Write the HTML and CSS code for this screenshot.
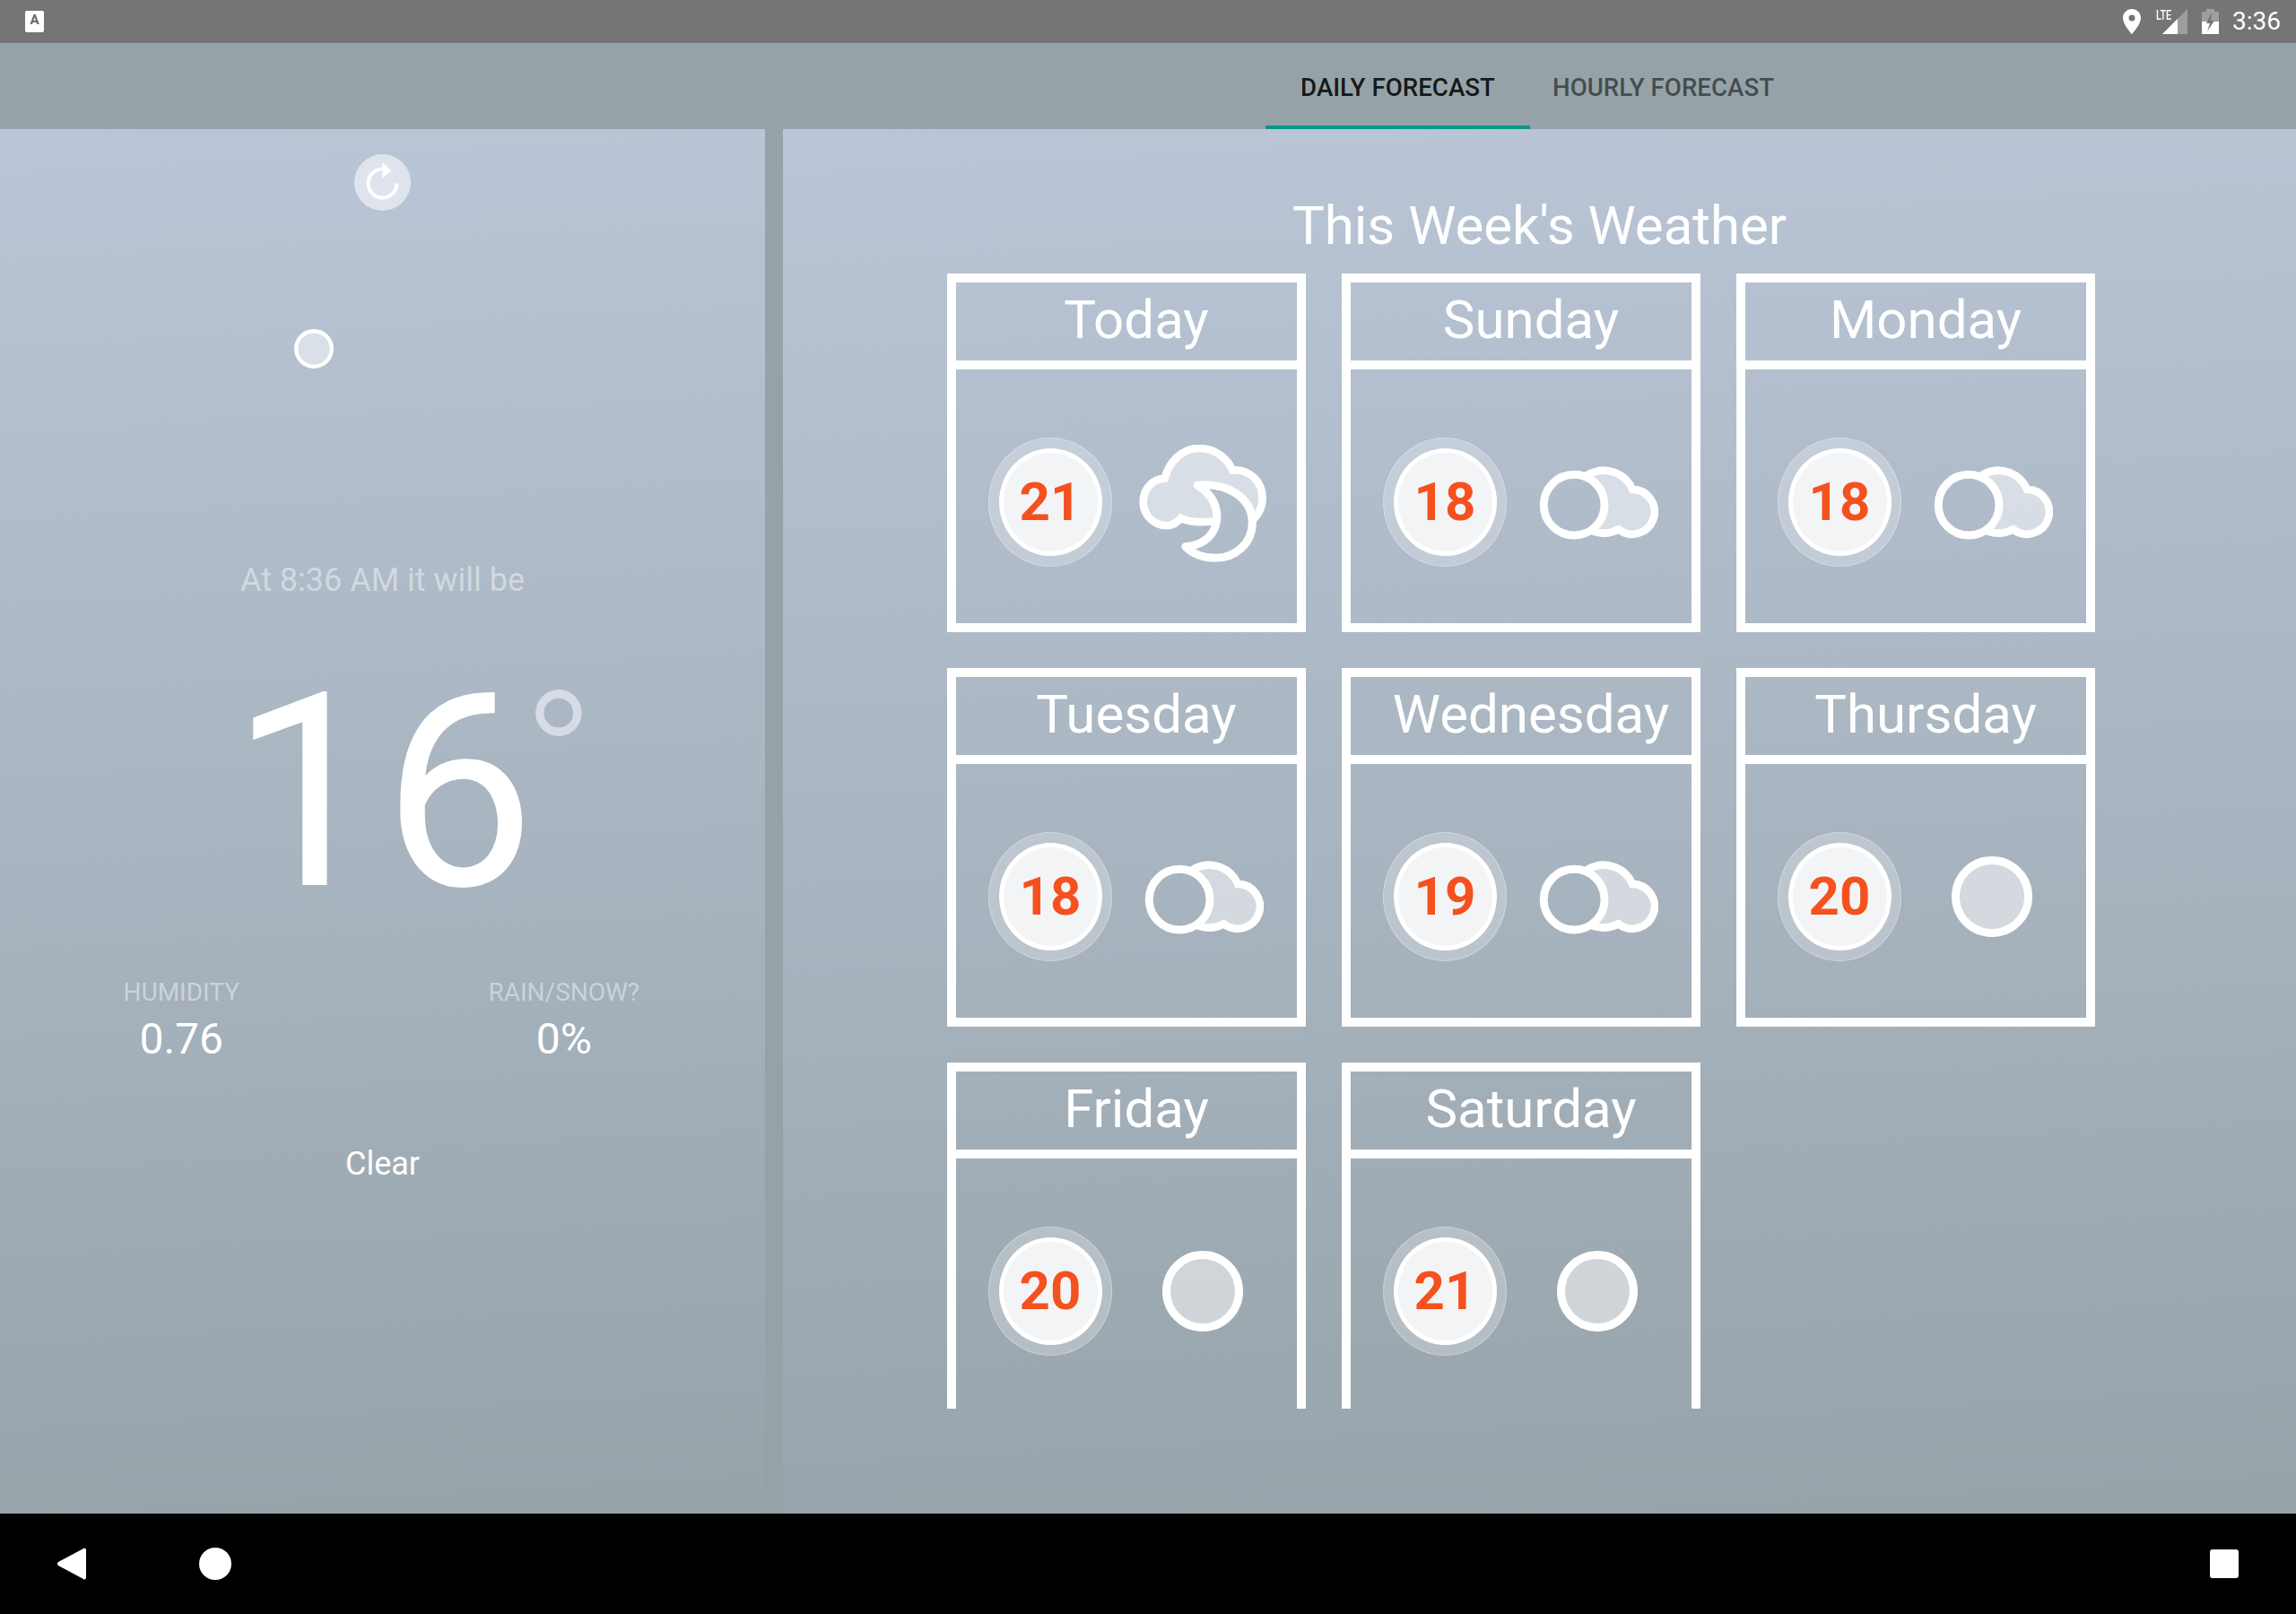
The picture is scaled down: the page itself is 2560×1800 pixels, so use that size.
FILE: index.html
```html
<!DOCTYPE html>
<html lang="en">
<head>
    <meta charset="UTF-8">
    <title>Weather</title>
    <link rel="stylesheet" href="styles.css">
</head>
<body>
    <svg class="defs" width="0" height="0">
        <defs>
            <mask id="moon-cut" maskUnits="userSpaceOnUse" x="680" y="600" width="445" height="410">
                <rect x="680" y="600" width="445" height="410" fill="white"/>
                <path d="M885 745 C990 735 1068 790 1068 870 C1068 940 1010 988 945 988 C905 988 870 975 845 950 C915 945 950 900 950 850 C950 805 925 770 885 745 Z" fill="black"/>
            </mask>
            <mask id="circle-cut" maskUnits="userSpaceOnUse" x="700" y="670" width="415" height="260">
                <rect x="700" y="670" width="415" height="260" fill="white"/>
                <circle cx="825" cy="805" r="102" fill="black"/>
            </mask>
            <symbol id="icon-night-cloud" viewBox="690 610 425 392">
                <path mask="url(#moon-cut)" class="wx-line" d="M776 722 C790 665 835 622 890 622 C940 622 982 650 1002 695 C1060 690 1102 735 1102 788 C1102 815 1090 840 1072 858 L900 868 C880 868 850 865 830 855 C815 872 800 880 782 880 C740 880 704 845 704 800 C704 758 735 725 776 722 Z"/>
                <path class="wx-stroke" d="M885 745 C990 735 1068 790 1068 870 C1068 940 1010 988 945 988 C905 988 870 975 845 950 C915 945 950 900 950 850 C950 805 925 770 885 745 Z"/>
            </symbol>
            <symbol id="icon-cloudy" viewBox="705 675 402 250">
                <path mask="url(#circle-cut)" class="wx-line" d="M1021 753 A75 75 0 1 1 974 887 A105 105 0 1 1 1021 753 Z"/>
                <circle class="wx-stroke" cx="825" cy="805" r="102"/>
            </symbol>
            <symbol id="icon-clear" viewBox="0 0 90 90">
                <circle class="wx-clear" cx="45" cy="45" r="40.5"/>
            </symbol>
        </defs>
    </svg>

    <div class="status-bar">
        <div class="kbd-icon">A</div>
        <div class="status-right">
            <svg class="pin" viewBox="0 0 20 28" width="20" height="28">
                <path fill-rule="evenodd" fill="#fff" d="M10 0C4.5 0 0 4.4 0 10c0 7.4 10 18 10 18s10-10.600 10-18C20 4.400 15.500 0 10 0zm0 13.500a3.500 3.500 0 1 1 0-7 3.500 3.500 0 0 1 0 7z"/>
            </svg>
            <div class="signal">
                <span class="lte">LTE</span>
                <svg viewBox="0 0 28 28" width="28" height="28">
                    <polygon points="28,0 28,28 0,28" fill="#fff" fill-opacity="0.3"/>
                    <polygon points="17,11 17,28 0,28" fill="#fff"/>
                </svg>
            </div>
            <svg class="battery" viewBox="0 0 19 28" width="19" height="28">
                <path d="M5 0h9v3h5v25H0V3h5z" fill="#fff" fill-opacity="0.3"/>
                <path d="M0 14h19v14H0z" fill="#fff"/>
                <polygon points="11,4 5,16 9,16 6,25 14,13 10,13" fill="#757575"/>
            </svg>
            <span class="clock">3:36</span>
        </div>
    </div>

    <div class="tab-bar">
        <div class="tab active">DAILY FORECAST</div>
        <div class="tab">HOURLY FORECAST</div>
    </div>

    <div class="main">
        <div class="current">
            <button class="refresh">
                <svg viewBox="0 0 63 63" width="63" height="63">
                    <path d="M31.500 16.500A16 16 0 1 0 47.500 32.500" fill="none" stroke="#fff" stroke-width="4"/>
                    <polygon points="31.500,9.500 41.500,18.500 31.500,27" fill="#fff"/>
                </svg>
            </button>
            <div class="current-icon-row">
                <svg class="current-icon"><use href="#icon-clear"/></svg>
            </div>
            <p class="forecast-time">At 8:36 AM it will be</p>
            <div class="temp"><div class="temp-num">16</div><span class="deg">°</span></div>
            <div class="stats">
                <div class="stat">
                    <div class="stat-label">HUMIDITY</div>
                    <div class="stat-value">0.76</div>
                </div>
                <div class="stat">
                    <div class="stat-label">RAIN/SNOW?</div>
                    <div class="stat-value">0%</div>
                </div>
            </div>
            <p class="summary">Clear</p>
        </div>

        <div class="week">
            <h1 class="week-title">This Week's Weather</h1>
            <div class="cards">
                <div class="card">
                    <div class="card-head">Today</div>
                    <div class="card-body">
                        <div class="badge"><span>21</span></div>
                        <svg class="wx wx-night"><use href="#icon-night-cloud"/></svg>
                    </div>
                </div>
                <div class="card">
                    <div class="card-head">Sunday</div>
                    <div class="card-body">
                        <div class="badge"><span>18</span></div>
                        <svg class="wx wx-cloudy"><use href="#icon-cloudy"/></svg>
                    </div>
                </div>
                <div class="card">
                    <div class="card-head">Monday</div>
                    <div class="card-body">
                        <div class="badge"><span>18</span></div>
                        <svg class="wx wx-cloudy"><use href="#icon-cloudy"/></svg>
                    </div>
                </div>
                <div class="card">
                    <div class="card-head">Tuesday</div>
                    <div class="card-body">
                        <div class="badge"><span>18</span></div>
                        <svg class="wx wx-cloudy"><use href="#icon-cloudy"/></svg>
                    </div>
                </div>
                <div class="card">
                    <div class="card-head">Wednesday</div>
                    <div class="card-body">
                        <div class="badge"><span>19</span></div>
                        <svg class="wx wx-cloudy"><use href="#icon-cloudy"/></svg>
                    </div>
                </div>
                <div class="card">
                    <div class="card-head">Thursday</div>
                    <div class="card-body">
                        <div class="badge"><span>20</span></div>
                        <svg class="wx wx-sun"><use href="#icon-clear"/></svg>
                    </div>
                </div>
                <div class="card">
                    <div class="card-head">Friday</div>
                    <div class="card-body">
                        <div class="badge"><span>20</span></div>
                        <svg class="wx wx-sun"><use href="#icon-clear"/></svg>
                    </div>
                </div>
                <div class="card">
                    <div class="card-head">Saturday</div>
                    <div class="card-body">
                        <div class="badge"><span>21</span></div>
                        <svg class="wx wx-sun"><use href="#icon-clear"/></svg>
                    </div>
                </div>
            </div>
        </div>
    </div>

    <div class="nav-bar">
        <div class="nav-left">
            <svg viewBox="0 0 32 36" width="32" height="36">
                <path d="M30 0.500C31 0.500 32 1.500 32 2.500V33.500C32 34.500 31 35.500 30 35.500C29.500 35.500 29 35.200 28.600 34.800L1 20C-0.300 19 -0.300 17 1 16L28.600 1.200C29 0.800 29.500 0.500 30 0.500Z" fill="#fff"/>
            </svg>
            <div class="nav-home"></div>
        </div>
        <div class="nav-recent"></div>
    </div>
</body>
</html>
```

FILE: styles.css
```css
* {
    box-sizing: border-box;
}
html, body {
    height: 100%;
}
body {
    margin: 0;
    width: 2560px;
    height: 1800px;
    overflow: hidden;
    display: flex;
    flex-direction: column;
    font-family: Roboto, "Liberation Sans", sans-serif;
    color: #fff;
    background: #95a3a8;
}
.defs {
    position: absolute;
}

/* status bar */
.status-bar {
    height: 48px;
    flex: none;
    background: #757575;
    display: flex;
    justify-content: space-between;
    align-items: center;
    padding: 0 17px 0 28px;
}
.kbd-icon {
    width: 21px;
    height: 24px;
    background: #fff;
    border-radius: 2px;
    color: #666;
    font-size: 15px;
    font-weight: 700;
    line-height: 20px;
    text-align: center;
}
.status-right {
    display: flex;
    align-items: center;
}
.pin {
    margin-right: 17px;
}
.signal {
    position: relative;
    width: 35px;
    padding-left: 7px;
    height: 28px;
    margin-right: 16px;
}
.signal svg {
    display: block;
}
.lte {
    position: absolute;
    left: 0;
    top: 0;
    font-size: 15px;
    font-weight: 500;
    line-height: 15px;
    transform: scaleX(0.72);
    transform-origin: left top;
}
.battery {
    margin-right: 15px;
}
.clock {
    font-size: 28px;
    line-height: 32px;
}

/* tabs */
.tab-bar {
    height: 96px;
    flex: none;
    background: #95a3a8;
    display: flex;
    padding-left: 1411px;
}
.tab {
    height: 96px;
    line-height: 100px;
    padding: 0 25px;
    font-size: 27.700px;
    font-weight: 500;
    color: rgba(0, 0, 0, 0.55);
    border-bottom: 4px solid transparent;
}
.tab.active {
    width: 295px;
    padding: 0;
    text-align: center;
    color: rgba(0, 0, 0, 0.87);
    border-bottom-color: #009688;
}

/* main panels */
.main {
    flex: 1;
    display: flex;
    gap: 20px;
    min-height: 0;
}
.current, .week {
    background: linear-gradient(177deg, #bac6d7 0%, #97a3a9 100%);
}
.current {
    width: 853px;
    display: flex;
    flex-direction: column;
    align-items: center;
    padding-top: 28px;
}
.refresh {
    width: 63px;
    height: 63px;
    padding: 0;
    border: none;
    border-radius: 50%;
    background: rgba(255, 255, 255, 0.55);
}
.refresh svg {
    display: block;
}
.current-icon-row {
    align-self: stretch;
    padding: 132px 0 0 328px;
}
.current-icon {
    display: block;
    width: 44px;
    height: 44px;
}
.forecast-time {
    margin: 212px 0 0;
    font-size: 36px;
    line-height: 48px;
    color: rgba(255, 255, 255, 0.45);
}
.temp {
    position: relative;
    width: 339px;
    margin-top: 62px;
    font-size: 302px;
    line-height: 302px;
}
.temp-num {
    white-space: nowrap;
    letter-spacing: -14px;
}
.temp-num::first-letter {
    letter-spacing: 0;
}
.deg {
    position: absolute;
    left: 325px;
    top: -33px;
    font-size: 216px;
    font-weight: 300;
    line-height: 302px;
    color: #d6dce5;
}
.stats {
    align-self: stretch;
    display: flex;
    margin-top: 52px;
}
.stat {
    text-align: center;
}
.stat:first-child {
    width: 406px;
}
.stat:last-child {
    width: 450px;
}
.stat-label {
    font-size: 28px;
    line-height: 40px;
    color: rgba(255, 255, 255, 0.45);
}
.stat-value {
    font-size: 48px;
    line-height: 64px;
}
.summary {
    margin: 83px 0 0;
    font-size: 36px;
    line-height: 48px;
}

/* week */
.week {
    flex: 1;
    display: flex;
    flex-direction: column;
    padding-top: 68px;
    min-width: 0;
}
.week-title {
    margin: 0;
    font-size: 60px;
    font-weight: 400;
    line-height: 80px;
    text-align: center;
}
.cards {
    margin: 13px 0 0 183px;
    height: 1266px;
    overflow: hidden;
    display: grid;
    grid-template-columns: repeat(3, 400px);
    grid-auto-rows: 400px;
    gap: 40px;
}
.card {
    border: 10px solid #fff;
    display: flex;
    flex-direction: column;
}
.card-head {
    height: 97px;
    flex: none;
    border-bottom: 10px solid #fff;
    padding-left: 22px;
    font-size: 60px;
    font-weight: 400;
    line-height: 84px;
    text-align: center;
}
.card-body {
    flex: 1;
    display: flex;
    align-items: center;
    padding: 12px 0 0 36px;
}
.badge {
    width: 138px;
    height: 144px;
    flex: none;
    display: flex;
    align-items: center;
    justify-content: center;
    border-radius: 50%;
    border: 1.500px solid rgba(255, 255, 255, 0.3);
    background: rgba(255, 255, 255, 0.25);
}
.badge span {
    width: 115px;
    height: 120px;
    border-radius: 50%;
    border: 5px solid #fff;
    background: #f3f4f6;
    color: #f4511e;
    font-size: 60px;
    font-weight: 700;
    line-height: 110px;
    text-align: center;
}
.wx {
    flex: none;
    display: block;
}
.wx-night {
    width: 142px;
    height: 131px;
    margin-left: 30px;
    margin-top: 3px;
}
.wx-cloudy {
    width: 134px;
    height: 83px;
    margin-left: 35px;
    margin-top: 4px;
}
.wx-sun {
    width: 90px;
    height: 90px;
    margin-left: 56px;
}
.wx-line {
    fill: rgba(255, 255, 255, 0.5);
    stroke: #fff;
    stroke-width: 26;
}
.wx-stroke {
    fill: none;
    stroke: #fff;
    stroke-width: 27;
    stroke-linejoin: round;
}
.wx-clear {
    fill: rgba(255, 255, 255, 0.5);
    stroke: #fff;
    stroke-width: 9;
}

/* nav bar */
.nav-bar {
    height: 112px;
    flex: none;
    background: #000;
    display: flex;
    justify-content: space-between;
    align-items: center;
    padding: 0 64px;
}
.nav-left {
    display: flex;
    align-items: center;
    gap: 126px;
}
.nav-left svg {
    display: block;
}
.nav-home {
    width: 36px;
    height: 36px;
    border-radius: 50%;
    background: #fff;
}
.nav-recent {
    width: 32px;
    height: 32px;
    border-radius: 3px;
    background: #fff;
}
```
